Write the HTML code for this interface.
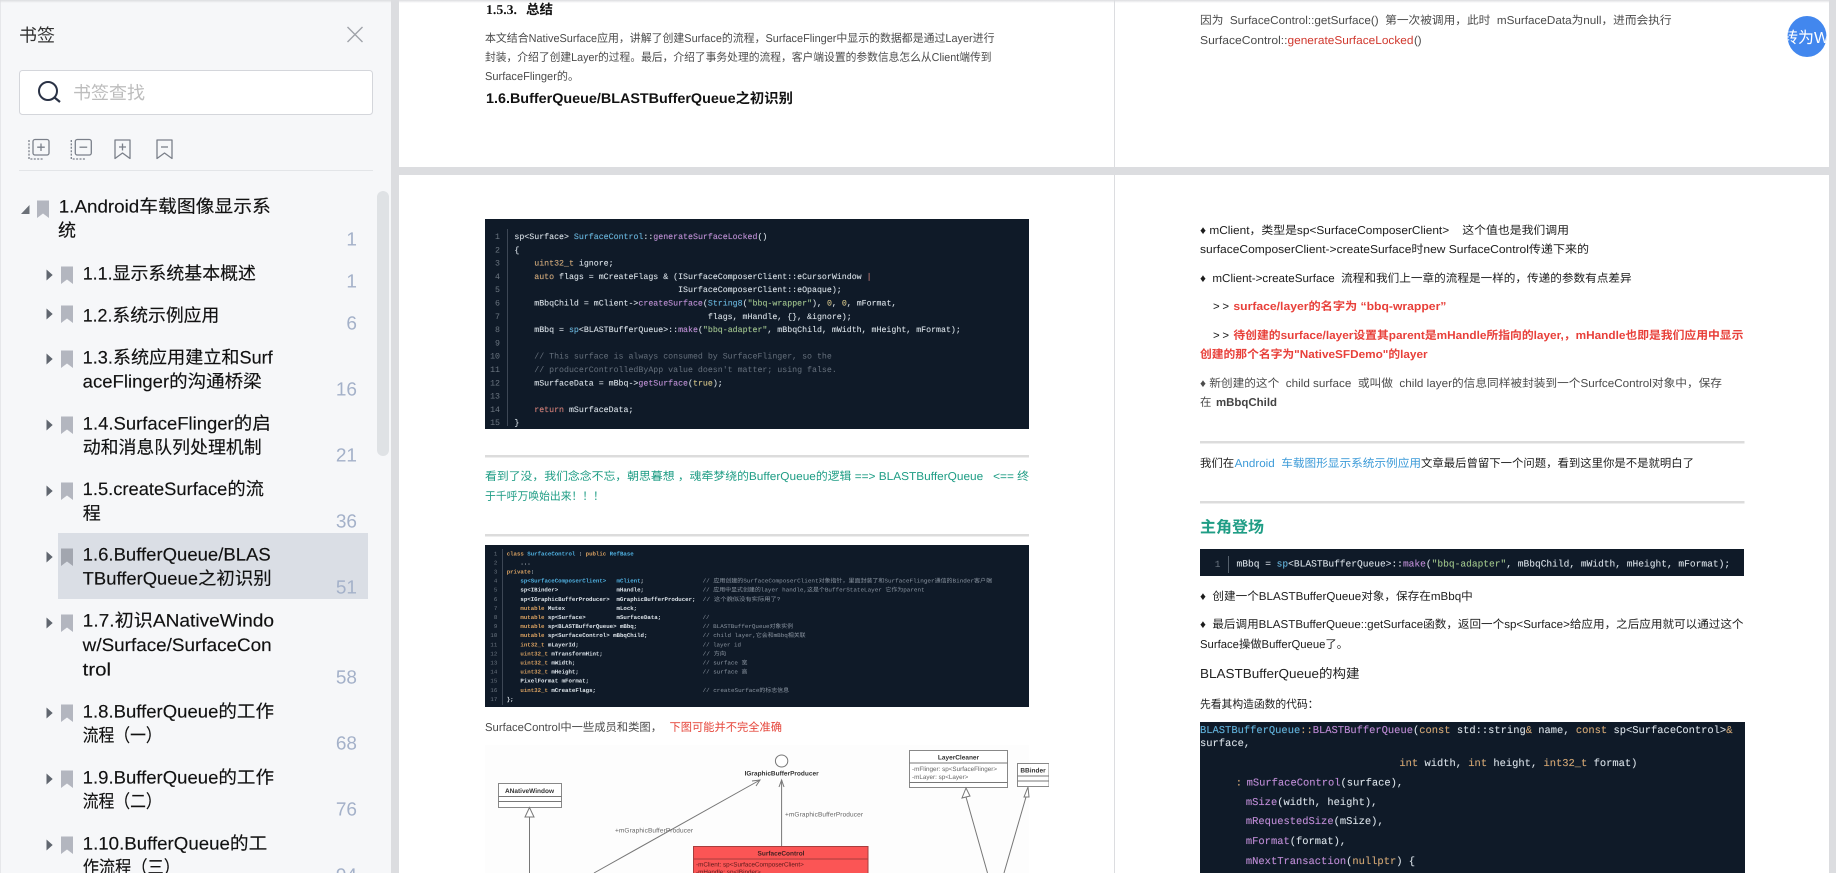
<!DOCTYPE html>
<html lang="zh">
<head>
<meta charset="utf-8">
<title>书签</title>
<style>
html,body{margin:0;padding:0;width:1836px;height:873px;overflow:hidden;background:#dcdde0}
svg{display:block;position:absolute;left:0;top:0;text-rendering:geometricPrecision}
text{white-space:pre;font-family:"Liberation Sans","Noto Sans CJK SC",sans-serif}
.m text,text.m{font-family:"Liberation Mono","Noto Sans CJK SC",monospace}
.s{font-size:18px;fill:#111;stroke:#111;stroke-width:.15px}
.n{font-size:19px;fill:#a4b1c9;text-anchor:end}
.p{font-size:11.4px;fill:#4c4c4c}
.k{font-size:11.4px;fill:#1c1c1c}
.r{font-size:11.4px;fill:#e8403a;font-weight:bold}
.h text{stroke:rgba(213,221,229,.28);stroke-width:.3px}
.bl{fill:#4fb0e0}.pu{fill:#c07fd8}.or{fill:#d8a060}.gr{fill:#98c379}.cm{fill:#66707c}.ye{fill:#d8c070}.re{fill:#d8685c}
</style>
</head>
<body>
<svg width="1836" height="873" viewBox="0 0 1836 873" xmlns="http://www.w3.org/2000/svg">
<defs>
<filter id="bl" x="0" y="0" width="100%" height="100%"><feGaussianBlur stdDeviation="0.35"/></filter>
<clipPath id="cc"><ellipse cx="1807" cy="36.5" rx="19.5" ry="20.5"/></clipPath>
<linearGradient id="tg" x1="0" y1="0" x2="0" y2="1"><stop offset="0" stop-color="#dcdde0"/><stop offset="1" stop-color="#dcdde0" stop-opacity="0"/></linearGradient>
</defs>

<!-- main bg -->
<rect width="1836" height="873" fill="#dcdde0"/>
<!-- pages -->
<rect x="399" y="0" width="715" height="167" fill="#fff"/>
<rect x="1115" y="0" width="714" height="167" fill="#fff"/>
<rect x="399" y="175" width="715" height="698" fill="#fff"/>
<rect x="1115" y="175" width="714" height="698" fill="#fff"/>

<!-- sidebar -->
<rect x="0" y="0" width="391" height="873" fill="#f6f7f9"/>
<rect x="0" y="0" width="1" height="873" fill="#e6e7ea"/>
<text x="19" y="41.5" style="font-size:18px;fill:#333">书签</text>
<path d="M347.5 27L362.5 42M362.5 27L347.5 42" stroke="#a0a3a9" stroke-width="1.4" fill="none"/>
<rect x="19.5" y="70.5" width="353" height="44" rx="3" fill="#fff" stroke="#d4d6db"/>
<circle cx="48" cy="91" r="9" fill="none" stroke="#2a3245" stroke-width="2"/>
<path d="M54.5 97.5L60 102" stroke="#2a3245" stroke-width="2.2" fill="none"/>
<text x="73" y="99" style="font-size:18px;fill:#bdbdbd">书签查找</text>

<!-- toolbar icons -->
<g fill="none" stroke="#7b808a" stroke-width="1.3">
<rect x="33" y="139.5" width="16" height="15.5" rx="2"/>
<path d="M41 143.5V151M37.2 147.2H44.8"/>
<path d="M29 140V159H44" stroke-dasharray="2 1.4"/>
<rect x="75.3" y="139.5" width="16" height="15.5" rx="2"/>
<path d="M79.5 147.2H87.2"/>
<path d="M71.3 140V159H86" stroke-dasharray="2 1.4"/>
<path d="M115 140H130V158.5L122.5 153L115 158.5Z" stroke-linejoin="round"/>
<path d="M122.5 143.5V150.5M119 147H126"/>
<path d="M157 140H172V158.5L164.5 153L157 158.5Z" stroke-linejoin="round"/>
<path d="M161 147H168"/>
</g>
<rect x="19" y="170" width="354" height="1" fill="#e3e5e8"/>

<!-- scroll thumb -->
<rect x="377" y="191" width="12" height="265" rx="6" fill="#dfe2e5"/>
<!-- highlight -->
<rect x="58" y="533" width="310" height="66" fill="#dadee5"/>

<!-- tree arrows -->
<path d="M21 214H29.5V205Z" fill="#6b7078"/>
<g fill="#60666f">
<path d="M46.5 269.5L52.7 275L46.5 280.5Z"/>
<path d="M46.5 308.5L52.7 314L46.5 319.5Z"/>
<path d="M46.5 353.5L52.7 359L46.5 364.5Z"/>
<path d="M46.5 419.5L52.7 425L46.5 430.5Z"/>
<path d="M46.5 485.5L52.7 491L46.5 496.5Z"/>
<path d="M46.5 551.5L52.7 557L46.5 562.5Z"/>
<path d="M46.5 617.5L52.7 623L46.5 628.5Z"/>
<path d="M46.5 707.5L52.7 713L46.5 718.5Z"/>
<path d="M46.5 773.5L52.7 779L46.5 784.5Z"/>
<path d="M46.5 839.5L52.7 845L46.5 850.5Z"/>
</g>
<!-- bookmarks -->
<g fill="#b3b6bf">
<path d="M37 200.5H49V218L43 213.5L37 218Z"/>
<path d="M61 266.5H73V284L67 279.5L61 284Z"/>
<path d="M61 305.5H73V323L67 318.5L61 323Z"/>
<path d="M61 350.5H73V368L67 363.5L61 368Z"/>
<path d="M61 416.5H73V434L67 429.5L61 434Z"/>
<path d="M61 482.5H73V500L67 495.5L61 500Z"/>
<path d="M61 548.5H73V566L67 561.5L61 566Z" fill="#a2a6af"/>
<path d="M61 614.5H73V632L67 627.5L61 632Z"/>
<path d="M61 704.5H73V722L67 717.5L61 722Z"/>
<path d="M61 770.5H73V788L67 783.5L61 788Z"/>
<path d="M61 836.5H73V854L67 849.5L61 854Z"/>
</g>
<!-- tree text -->
<text class="s" x="58.8" y="212.5" textLength="212" lengthAdjust="spacingAndGlyphs">1.Android车载图像显示系</text>
<text class="s" x="58" y="236.5">统</text>
<text class="n" x="357" y="245.5">1</text>
<text class="s" x="82.7" y="279.5" textLength="173.3" lengthAdjust="spacingAndGlyphs">1.1.显示系统基本概述</text>
<text class="n" x="357" y="287.5">1</text>
<text class="s" x="82.7" y="321.5" textLength="136.6" lengthAdjust="spacingAndGlyphs">1.2.系统示例应用</text>
<text class="n" x="357" y="329.5">6</text>
<text class="s" x="82.7" y="363.5" textLength="190" lengthAdjust="spacingAndGlyphs">1.3.系统应用建立和Surf</text>
<text class="s" x="82.7" y="387.5" textLength="179" lengthAdjust="spacingAndGlyphs">aceFlinger的沟通桥梁</text>
<text class="n" x="357" y="395.5">16</text>
<text class="s" x="82.7" y="429.5" textLength="188" lengthAdjust="spacingAndGlyphs">1.4.SurfaceFlinger的启</text>
<text class="s" x="82.7" y="453.5" textLength="179" lengthAdjust="spacingAndGlyphs">动和消息队列处理机制</text>
<text class="n" x="357" y="461.5">21</text>
<text class="s" x="82.7" y="495" textLength="181.3" lengthAdjust="spacingAndGlyphs">1.5.createSurface的流</text>
<text class="s" x="82.7" y="519.5">程</text>
<text class="n" x="357" y="527.5">36</text>
<text class="s" x="82.7" y="560.5" textLength="188" lengthAdjust="spacingAndGlyphs">1.6.BufferQueue/BLAS</text>
<text class="s" x="82.7" y="584.5" textLength="189" lengthAdjust="spacingAndGlyphs">TBufferQueue之初识别</text>
<text class="n" x="357" y="593.5">51</text>
<text class="s" x="82.7" y="626.5" textLength="191.3" lengthAdjust="spacingAndGlyphs">1.7.初识ANativeWindo</text>
<text class="s" x="82.7" y="651" textLength="189" lengthAdjust="spacingAndGlyphs">w/Surface/SurfaceCon</text>
<text class="s" x="82.7" y="675.5" textLength="28.3" lengthAdjust="spacingAndGlyphs">trol</text>
<text class="n" x="357" y="683.5">58</text>
<text class="s" x="82.7" y="717.5" textLength="191.3" lengthAdjust="spacingAndGlyphs">1.8.BufferQueue的工作</text>
<text class="s" x="82.7" y="741.5" textLength="79" lengthAdjust="spacingAndGlyphs">流程（一）</text>
<text class="n" x="357" y="749.5">68</text>
<text class="s" x="82.7" y="783.5" textLength="191.3" lengthAdjust="spacingAndGlyphs">1.9.BufferQueue的工作</text>
<text class="s" x="82.7" y="807.5" textLength="79" lengthAdjust="spacingAndGlyphs">流程（二）</text>
<text class="n" x="357" y="815.5">76</text>
<text class="s" x="82.7" y="849.5" textLength="184.6" lengthAdjust="spacingAndGlyphs">1.10.BufferQueue的工</text>
<text class="s" x="82.7" y="873.5" textLength="97.3" lengthAdjust="spacingAndGlyphs">作流程（三）</text>
<text class="n" x="357" y="881.5">94</text>

<!-- page 1 top -->
<text x="486" y="14" style="font-size:13.5px;font-weight:bold;fill:#111;font-family:'Liberation Serif','Noto Sans CJK SC',serif" textLength="31" lengthAdjust="spacingAndGlyphs">1.5.3.</text>
<text x="526" y="14" style="font-size:13.5px;font-weight:bold;fill:#111">总结</text>
<text class="p" x="485" y="42" textLength="509.5" lengthAdjust="spacingAndGlyphs">本文结合NativeSurface应用，讲解了创建Surface的流程，SurfaceFlinger中显示的数据都是通过Layer进行</text>
<text class="p" x="485" y="61" textLength="506.5" lengthAdjust="spacingAndGlyphs">封装，介绍了创建Layer的过程。最后，介绍了事务处理的流程，客户端设置的参数信息怎么从Client端传到</text>
<text class="p" x="485" y="80" textLength="94" lengthAdjust="spacingAndGlyphs">SurfaceFlinger的。</text>
<text x="486" y="103" style="font-size:14px;font-weight:bold;fill:#111" textLength="307" lengthAdjust="spacingAndGlyphs">1.6.BufferQueue/BLASTBufferQueue之初识别</text>

<!-- page 2 top -->
<text class="p" x="1200" y="24" textLength="471.6" lengthAdjust="spacingAndGlyphs">因为  SurfaceControl::getSurface()  第一次被调用，此时  mSurfaceData为null，进而会执行</text>
<text class="p" x="1200" y="44" textLength="87.5" lengthAdjust="spacingAndGlyphs">SurfaceControl::</text>
<text class="p" x="1287.5" y="44" style="fill:#d0392f" textLength="126" lengthAdjust="spacingAndGlyphs">generateSurfaceLocked</text>
<text class="p" x="1414" y="44">()</text>

<!-- float button -->
<ellipse cx="1807" cy="36.5" rx="19.5" ry="20.5" fill="#4287ee"/>
<g clip-path="url(#cc)"><text x="1782" y="43" style="font-size:16px;fill:#fff">转为Word</text></g>

<!-- code block 1 -->
<rect x="485" y="219" width="544" height="210" fill="#0f1a28"/>
<g filter="url(#bl)">
<rect x="507" y="229" width="1" height="197" fill="#3d4754"/>
<g class="m" style="font-size:8.28px">
<g fill="#6b7580" text-anchor="end">
<text x="500" y="239">1</text><text x="500" y="252.3">2</text><text x="500" y="265.6">3</text><text x="500" y="278.9">4</text><text x="500" y="292.2">5</text><text x="500" y="305.5">6</text><text x="500" y="318.8">7</text><text x="500" y="332.1">8</text><text x="500" y="345.4">9</text><text x="500" y="358.7">10</text><text x="500" y="372">11</text><text x="500" y="385.3">12</text><text x="500" y="398.6">13</text><text x="500" y="411.9">14</text><text x="500" y="425.2">15</text>
</g>
<g fill="#dde4ea" class="h">
<text x="514.4" y="239">sp&lt;Surface&gt; <tspan class="bl">SurfaceControl</tspan>::<tspan class="pu">generateSurfaceLocked</tspan>()</text>
<text x="514.4" y="252.3">{</text>
<text x="514.4" y="265.6">    <tspan class="or">uint32_t</tspan> ignore;</text>
<text x="514.4" y="278.9">    <tspan class="or">auto</tspan> flags = mCreateFlags &amp; (ISurfaceComposerClient::eCursorWindow <tspan class="re">|</tspan></text>
<text x="514.4" y="292.2">                                 ISurfaceComposerClient::eOpaque);</text>
<text x="514.4" y="305.5">    mBbqChild = mClient-&gt;<tspan class="pu">createSurface</tspan>(<tspan class="bl">String8</tspan>(<tspan class="gr">"bbq-wrapper"</tspan>), <tspan class="ye">0</tspan>, <tspan class="ye">0</tspan>, mFormat,</text>
<text x="514.4" y="318.8">                                       flags, mHandle, {}, &amp;ignore);</text>
<text x="514.4" y="332.1">    mBbq = <tspan class="bl">sp</tspan>&lt;BLASTBufferQueue&gt;::<tspan class="pu">make</tspan>(<tspan class="gr">"bbq-adapter"</tspan>, mBbqChild, mWidth, mHeight, mFormat);</text>
<text x="514.4" y="358.7" class="m" style="stroke:none"><tspan class="cm">    // This surface is always consumed by SurfaceFlinger, so the</tspan></text>
<text x="514.4" y="372" class="m" style="stroke:none"><tspan class="cm">    // producerControlledByApp value doesn't matter; using false.</tspan></text>
<text x="514.4" y="385.3">    mSurfaceData = mBbq-&gt;<tspan class="pu">getSurface</tspan>(<tspan class="ye">true</tspan>);</text>
<text x="514.4" y="411.9">    <tspan class="re">return</tspan> mSurfaceData;</text>
<text x="514.4" y="425.2">}</text>
</g>
</g>
</g>

<rect x="485" y="455" width="544" height="2.5" fill="#dcdcdc"/>
<text x="485" y="480" style="font-size:11.4px;fill:#1f9d85" textLength="544" lengthAdjust="spacingAndGlyphs">看到了没，我们念念不忘，朝思暮想 ，魂牵梦绕的BufferQueue的逻辑 ==&gt; BLASTBufferQueue   &lt;== 终</text>
<text x="485" y="500" style="font-size:11.4px;fill:#1f9d85" textLength="119" lengthAdjust="spacingAndGlyphs">于千呼万唤始出来！！！</text>
<rect x="485" y="534" width="544" height="2.5" fill="#dcdcdc"/>

<!-- code block 2 -->
<rect x="485" y="545" width="544" height="162" fill="#0f1a28"/>
<g filter="url(#bl)">
<rect x="502" y="549" width="1" height="156" fill="#3d4754"/>
<g class="m" style="font-size:5.73px">
<g fill="#6b7580" text-anchor="end">
<text x="497.3" y="555.3">1</text><text x="497.3" y="564.4">2</text><text x="497.3" y="573.5">3</text><text x="497.3" y="582.6">4</text><text x="497.3" y="591.7">5</text><text x="497.3" y="600.8">6</text><text x="497.3" y="609.9">7</text><text x="497.3" y="619">8</text><text x="497.3" y="628.1">9</text><text x="497.3" y="637.2">10</text><text x="497.3" y="646.3">11</text><text x="497.3" y="655.4">12</text><text x="497.3" y="664.5">13</text><text x="497.3" y="673.6">14</text><text x="497.3" y="682.7">15</text><text x="497.3" y="691.8">16</text><text x="497.3" y="700.9">17</text>
</g>
<g fill="#dde4ea" style="font-weight:bold">
<text x="506.7" y="555.3"><tspan class="or">class</tspan> <tspan class="bl">SurfaceControl</tspan> : <tspan class="or">public</tspan> <tspan class="bl">RefBase</tspan></text>
<text x="506.7" y="564.4">    ...</text>
<text x="506.7" y="573.5"><tspan class="or">private</tspan>:</text>
<text x="506.7" y="582.6">    <tspan class="bl">sp&lt;SurfaceComposerClient&gt;</tspan>   <tspan class="bl">mClient</tspan>;</text>
<text x="506.7" y="591.7">    sp&lt;IBinder&gt;                 mHandle;</text>
<text x="506.7" y="600.8">    sp&lt;IGraphicBufferProducer&gt;  mGraphicBufferProducer;</text>
<text x="506.7" y="609.9">    <tspan class="or">mutable</tspan> Mutex               mLock;</text>
<text x="506.7" y="619">    <tspan class="or">mutable</tspan> sp&lt;Surface&gt;         mSurfaceData;</text>
<text x="506.7" y="628.1">    <tspan class="or">mutable</tspan> sp&lt;BLASTBufferQueue&gt; mBbq;</text>
<text x="506.7" y="637.2">    <tspan class="or">mutable</tspan> sp&lt;SurfaceControl&gt; mBbqChild;</text>
<text x="506.7" y="646.3">    <tspan class="or">int32_t</tspan> mLayerId;</text>
<text x="506.7" y="655.4">    <tspan class="or">uint32_t</tspan> mTransformHint;</text>
<text x="506.7" y="664.5">    <tspan class="or">uint32_t</tspan> mWidth;</text>
<text x="506.7" y="673.6">    <tspan class="or">uint32_t</tspan> mHeight;</text>
<text x="506.7" y="682.7">    PixelFormat mFormat;</text>
<text x="506.7" y="691.8">    <tspan class="or">uint32_t</tspan> mCreateFlags;</text>
<text x="506.7" y="700.9">};</text>
</g>
<g fill="#8a94a0">
<text x="702.6" y="582.6" textLength="289.4" lengthAdjust="spacingAndGlyphs">// 应用创建的SurfaceComposerClient对象指针，里面封装了和SurfaceFlinger通信的Binder客户端</text>
<text x="702.6" y="591.7" textLength="222" lengthAdjust="spacingAndGlyphs">// 应用中显式创建的layer handle,这是个BufferStateLayer 它作为parent</text>
<text x="702.6" y="600.8" textLength="78" lengthAdjust="spacingAndGlyphs">// 这个貌似没有实际用了?</text>
<text x="702.6" y="619">//</text>
<text x="702.6" y="628.1" textLength="90.4" lengthAdjust="spacingAndGlyphs">// BLASTBufferQueue对象实例</text>
<text x="702.6" y="637.2" textLength="103" lengthAdjust="spacingAndGlyphs">// child layer,它会和mBbq相关联</text>
<text x="702.6" y="646.3" textLength="38.4" lengthAdjust="spacingAndGlyphs">// layer id</text>
<text x="702.6" y="655.4" textLength="23.4" lengthAdjust="spacingAndGlyphs">// 方向</text>
<text x="702.6" y="664.5" textLength="44.8" lengthAdjust="spacingAndGlyphs">// surface 宽</text>
<text x="702.6" y="673.6" textLength="44.8" lengthAdjust="spacingAndGlyphs">// surface 高</text>
<text x="702.6" y="691.8" textLength="86.4" lengthAdjust="spacingAndGlyphs">// createSurface的标志信息</text>
</g>
</g>
</g>

<text class="p" x="485" y="731" textLength="177" lengthAdjust="spacingAndGlyphs">SurfaceControl中一些成员和类图，</text>
<text class="p" x="669.5" y="731" style="fill:#e5453a" textLength="112.5" lengthAdjust="spacingAndGlyphs">下图可能并不完全准确</text>

<!-- UML diagram -->
<g filter="url(#bl)">
<rect x="485" y="745" width="544" height="128" fill="#fdfdfd"/>
<g fill="none" stroke="#777" stroke-width="1">
<rect x="498.5" y="783.5" width="63" height="24" fill="#fff" stroke="#888"/>
<path d="M498.5 796.5H561.5M498.5 801.5H561.5"/>
<path d="M529.5 807.5L525 817H534Z" fill="#fff"/>
<path d="M529.5 817V873"/>
<ellipse cx="781.6" cy="761" rx="6.2" ry="6" fill="#fff"/>
<path d="M760 780L594 873"/>
<path d="M752 781L760 780L756 786"/>
<path d="M781.6 780V846"/>
<path d="M779 787L781.6 780L784 787"/>
<rect x="909.5" y="750.5" width="98" height="37" fill="#fff" stroke="#888"/>
<path d="M909.5 763H1007.5M909.5 782.5H1007.5"/>
<rect x="1017.5" y="763.5" width="31.5" height="23" fill="#fff" stroke="#888"/>
<path d="M1017.5 776H1049M1017.5 781H1049"/>
<path d="M966 788L962 798L970 796Z" fill="#fff"/>
<path d="M1028 787L1024 797L1029 797Z" fill="#fff"/>
<path d="M966 797L987.5 873M1026 797L1004 873"/>
</g>
<text x="529.5" y="793" text-anchor="middle" style="font-size:6.5px;font-weight:bold;fill:#333">ANativeWindow</text>
<text x="781.6" y="775.5" text-anchor="middle" style="font-size:6.5px;font-weight:bold;fill:#333">IGraphicBufferProducer</text>
<text x="615" y="832.5" style="font-size:6.5px;fill:#666" textLength="78">+mGraphicBufferProducer</text>
<text x="785" y="816.5" style="font-size:6.5px;fill:#666" textLength="78">+mGraphicBufferProducer</text>
<text x="958.5" y="759.5" text-anchor="middle" style="font-size:6.5px;font-weight:bold;fill:#333">LayerCleaner</text>
<text x="1033" y="772.5" text-anchor="middle" style="font-size:6.5px;font-weight:bold;fill:#333">BBinder</text>
<text x="912" y="771" style="font-size:6.3px;fill:#666">-mFlinger: sp&lt;SurfaceFlinger&gt;</text>
<text x="912" y="779" style="font-size:6.3px;fill:#666">-mLayer: sp&lt;Layer&gt;</text>
<rect x="693.5" y="846.5" width="174.5" height="30" fill="#fb5555" stroke="#a83c3c"/>
<path d="M693.5 859H868" stroke="#a83c3c" fill="none"/>
<text x="781" y="855.5" text-anchor="middle" style="font-size:6.5px;font-weight:bold;fill:#402020">SurfaceControl</text>
<text x="696" y="866.5" style="font-size:6.3px;fill:#5a1a1a">-mClient: sp&lt;SurfaceComposerClient&gt;</text>
<text x="696" y="874" style="font-size:6.3px;fill:#5a1a1a">-mHandle: sp&lt;IBinder&gt;</text>
</g>

<!-- page 2 lower -->
<text class="k" x="1200" y="234" textLength="369" lengthAdjust="spacingAndGlyphs">♦ mClient，类型是sp&lt;SurfaceComposerClient&gt;    这个值也是我们调用</text>
<text class="k" x="1200" y="253" textLength="389" lengthAdjust="spacingAndGlyphs">surfaceComposerClient-&gt;createSurface时new SurfaceControl传递下来的</text>
<text class="k" x="1200" y="282" textLength="431.6" lengthAdjust="spacingAndGlyphs">♦  mClient-&gt;createSurface  流程和我们上一章的流程是一样的，传递的参数有点差异</text>
<text class="k" x="1213" y="310" textLength="16">&gt; &gt;</text>
<text class="r" x="1233.4" y="310" textLength="213" lengthAdjust="spacingAndGlyphs">surface/layer的名字为 “bbq-wrapper”</text>
<text class="k" x="1213" y="339" textLength="16">&gt; &gt;</text>
<text class="r" x="1233.4" y="339" textLength="510" lengthAdjust="spacingAndGlyphs">待创建的surface/layer设置其parent是mHandle所指向的layer,，mHandle也即是我们应用中显示</text>
<text class="r" x="1200" y="358" textLength="227.6" lengthAdjust="spacingAndGlyphs">创建的那个名字为"NativeSFDemo"的layer</text>
<text class="p" x="1200" y="387" textLength="522" lengthAdjust="spacingAndGlyphs">♦ 新创建的这个  child surface  或叫做  child layer的信息同样被封装到一个SurfceControl对象中，保存</text>
<text class="p" x="1200" y="406">在</text>
<text class="p" x="1216" y="406" style="font-weight:bold;fill:#444" textLength="61" lengthAdjust="spacingAndGlyphs">mBbqChild</text>
<rect x="1200" y="441" width="544.5" height="2.5" fill="#dcdcdc"/>
<text class="k" x="1200" y="467">我们在</text>
<text class="k" x="1234.6" y="467" style="fill:#3d9bd8" textLength="186.4" lengthAdjust="spacingAndGlyphs">Android  车载图形显示系统示例应用</text>
<text class="k" x="1421" y="467" textLength="273" lengthAdjust="spacingAndGlyphs">文章最后曾留下一个问题，看到这里你是不是就明白了</text>
<rect x="1200" y="501" width="544.5" height="2.5" fill="#dcdcdc"/>
<text x="1200" y="532.5" style="font-size:16px;font-weight:bold;fill:#1f9d85">主角登场</text>

<rect x="1200" y="549" width="544" height="27" fill="#0f1a28"/>
<g class="m h" filter="url(#bl)" style="font-size:9.57px">
<rect x="1228" y="556" width="1" height="17" fill="#55606c"/>
<text x="1217.6" y="567" text-anchor="middle" fill="#6b7580" style="stroke:none">1</text>
<text x="1236.5" y="566.5" fill="#dde4ea">mBbq = <tspan class="bl">sp</tspan>&lt;BLASTBufferQueue&gt;::<tspan class="pu">make</tspan>(<tspan class="gr">"bbq-adapter"</tspan>, mBbqChild, mWidth, mHeight, mFormat);</text>
</g>

<text class="k" x="1200" y="600" textLength="272.8" lengthAdjust="spacingAndGlyphs">♦  创建一个BLASTBufferQueue对象，保存在mBbq中</text>
<text class="k" x="1200" y="628" textLength="543.5" lengthAdjust="spacingAndGlyphs">♦  最后调用BLASTBufferQueue::getSurface函数，返回一个sp&lt;Surface&gt;给应用，之后应用就可以通过这个</text>
<text class="k" x="1200" y="648" textLength="148" lengthAdjust="spacingAndGlyphs">Surface操做BufferQueue了。</text>
<text x="1200" y="678" style="font-size:13px;fill:#222" textLength="159.5" lengthAdjust="spacingAndGlyphs">BLASTBufferQueue的构建</text>
<text class="k" x="1200" y="708" textLength="118.5" lengthAdjust="spacingAndGlyphs">先看其构造函数的代码：</text>

<rect x="1200" y="722" width="545" height="151" fill="#0f1a28"/>
<g class="m h" style="font-size:10.44px" fill="#dde4ea">
<text x="1200" y="733"><tspan class="bl">BLASTBufferQueue</tspan><tspan class="or">::</tspan><tspan class="pu">BLASTBufferQueue</tspan>(<tspan class="or">const</tspan> std::string<tspan class="or">&amp;</tspan> name, <tspan class="or">const</tspan> sp&lt;SurfaceControl&gt;<tspan class="or">&amp;</tspan></text>
<text x="1200" y="746">surface,</text>
<text x="1399.4" y="766"><tspan class="or">int</tspan> width, <tspan class="or">int</tspan> height, <tspan class="or">int32_t</tspan> format)</text>
<text x="1235.7" y="785.5"><tspan class="or">:</tspan></text>
<text x="1246.6" y="785.5"><tspan class="pu">mSurfaceControl</tspan>(surface),</text>
<text x="1245.9" y="805"><tspan class="pu">mSize</tspan>(width, height),</text>
<text x="1245.9" y="824"><tspan class="pu">mRequestedSize</tspan>(mSize),</text>
<text x="1245.9" y="844"><tspan class="pu">mFormat</tspan>(format),</text>
<text x="1245.9" y="864"><tspan class="pu">mNextTransaction</tspan>(<tspan class="or">nullptr</tspan>) {</text>
</g>

<!-- top shadow -->
<rect x="0" y="0" width="1836" height="3" fill="url(#tg)"/>
</svg>
</body>
</html>
